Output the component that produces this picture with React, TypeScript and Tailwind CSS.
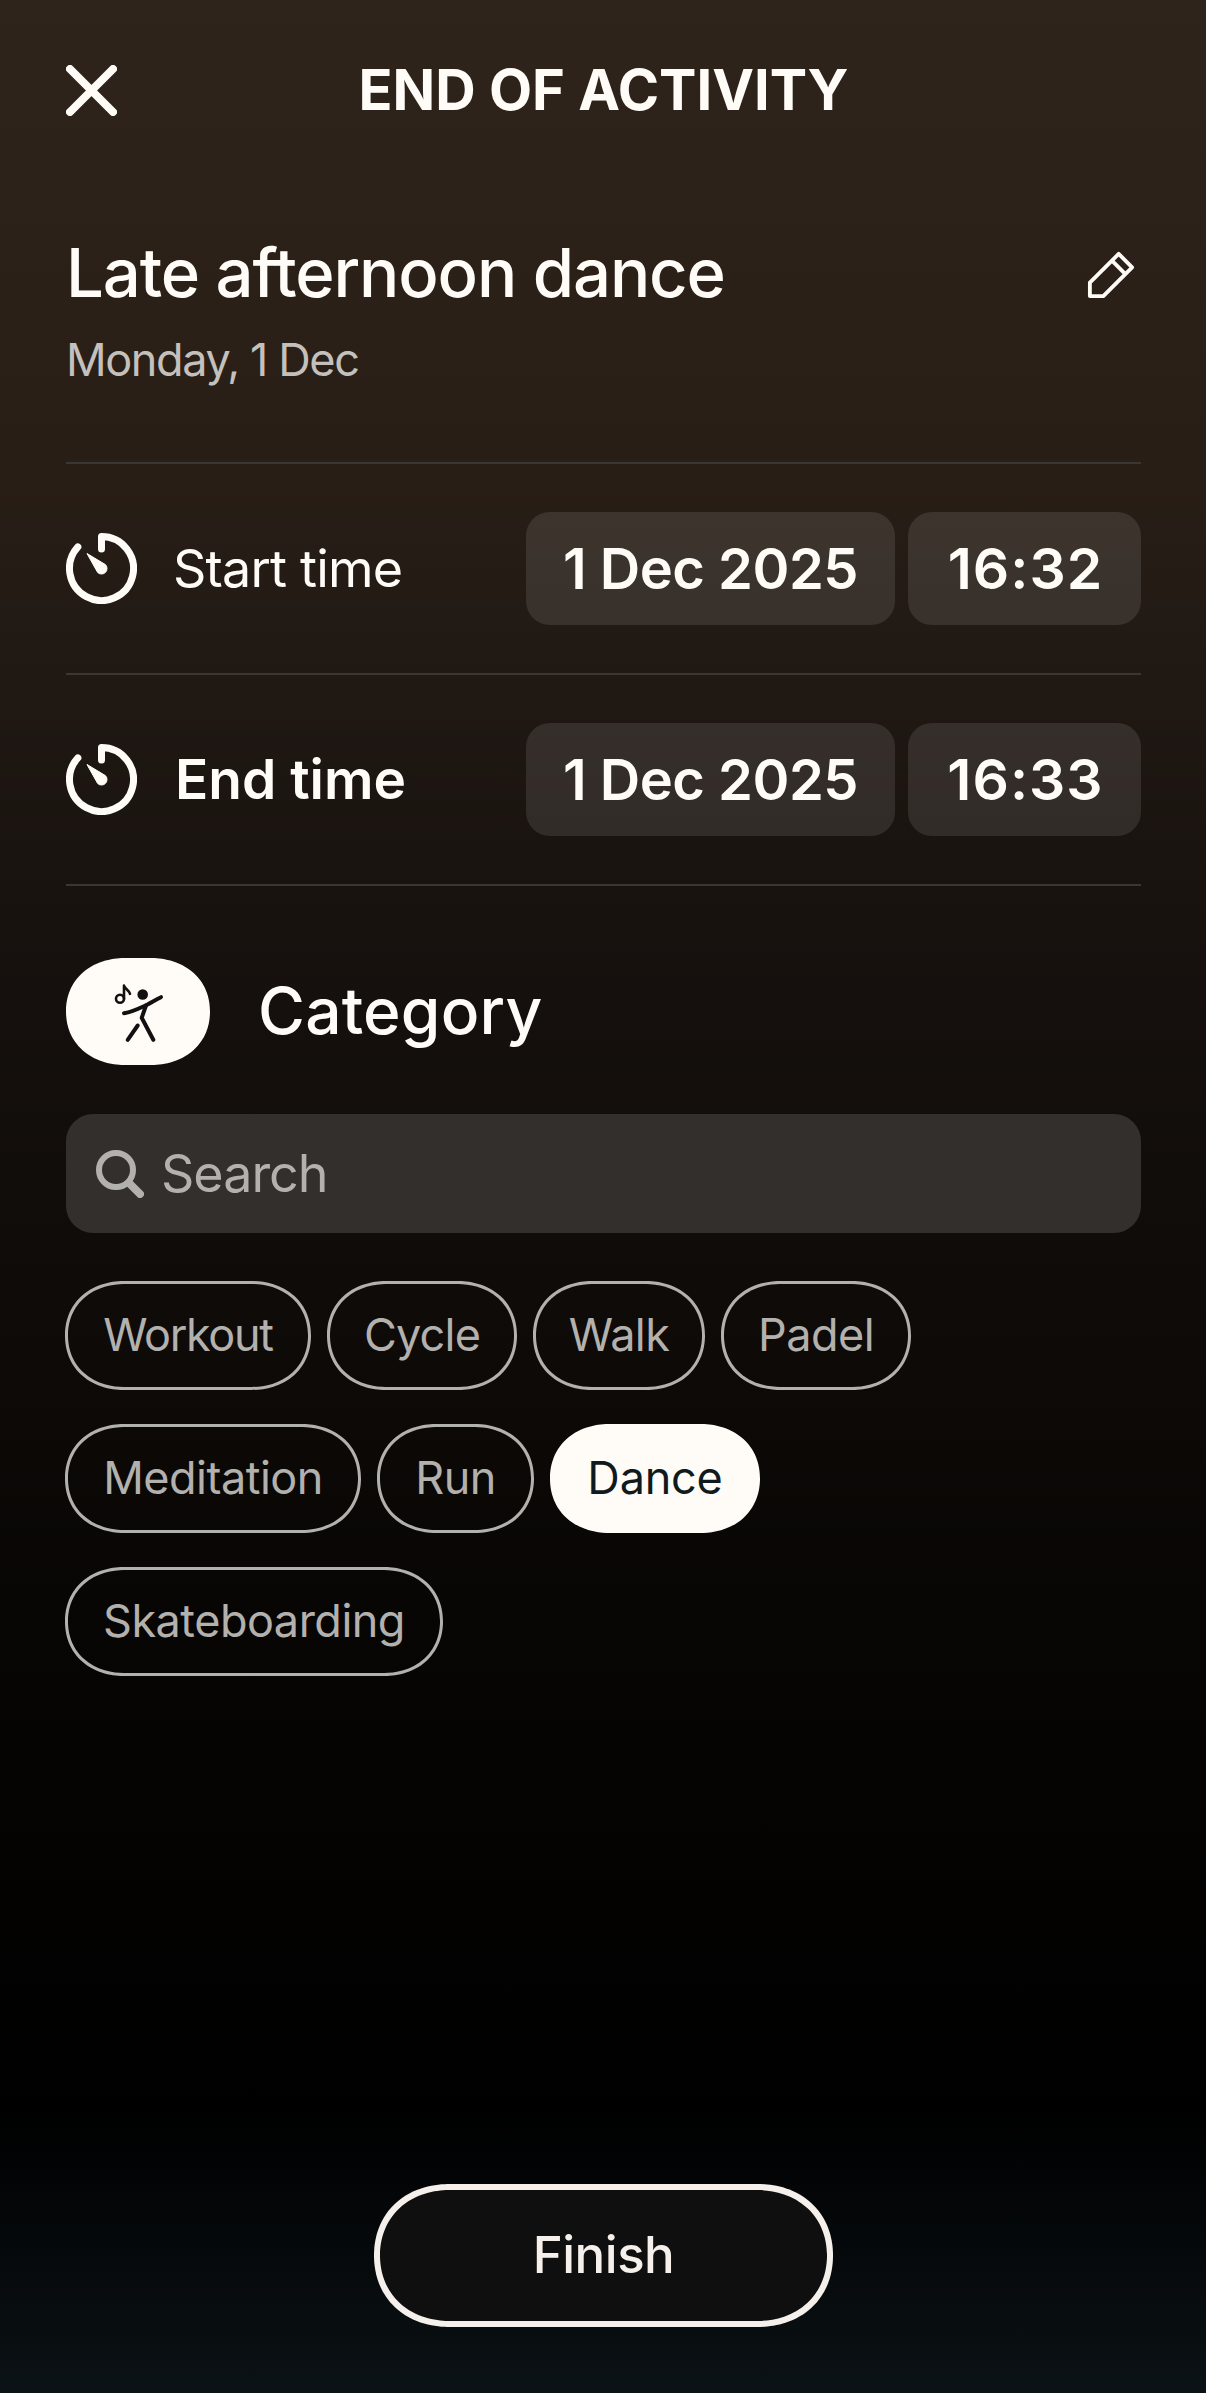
const TimerIcon = () => (
  <svg width="71" height="71" viewBox="0 0 71 71" fill="none" className="shrink-0">
    <path
      d="M11.85 13.95 A32 32 0 1 0 35.5 3.5 V16"
      stroke="#fffcf8"
      strokeWidth="7"
      strokeLinecap="round"
      strokeLinejoin="round"
    />
    <path
      d="M21 20.5 L39.4 31.6 A5.5 5.5 0 0 1 31.6 39.4 Z"
      fill="#fffcf8"
      stroke="#fffcf8"
      strokeWidth="1"
      strokeLinejoin="round"
    />
  </svg>
);

const DanceIcon = () => (
  <svg width="54" height="62" viewBox="0 0 54 62" fill="none">
    <g stroke="#111" strokeLinecap="round" strokeLinejoin="round">
      <circle cx="9" cy="17.8" r="4" strokeWidth="2.6" />
      <path d="M13 17.8 V4.5 C14 8 18 9 19 12.8" strokeWidth="2.6" />
      <path d="M13 32.2 C20 31 27 28 32.3 25.5 C38 23 44 19 50 16.2" strokeWidth="4" />
      <path d="M35 24.5 L30.7 36.8 L42.3 58.8" strokeWidth="4" />
      <path d="M26.7 44.5 L16.7 58.8" strokeWidth="4" />
    </g>
    <circle cx="31.7" cy="13.5" r="5.3" fill="#111" />
  </svg>
);

const TimeRow = ({ label, time, active }: { label: string; time: string; active?: boolean }) => (
  <div className="flex h-[211px] items-center border-b-2 border-[#3a3633]">
    <TimerIcon />
    <span
      className={`text-[#fffcf8] ${
        active ? "ml-[38px] text-[55px] font-semibold" : "ml-[36px] text-[52px] font-normal tracking-[-0.8px]"
      }`}
    >
      {label}
    </span>
    <div className="ml-auto flex gap-[13px] font-semibold text-[#fffcf8]">
      <div className="flex h-[113px] w-[369px] items-center justify-center rounded-[24px] bg-white/10 text-[56px] tracking-[-0.5px]">
        1 Dec 2025
      </div>
      <div className="flex h-[113px] w-[233px] items-center justify-center rounded-[24px] bg-white/10 pl-[2px] text-[57px] tracking-[1px]">
        {time}
      </div>
    </div>
  </div>
);

const Chip = ({ label, width, active }: { label: string; width: string; active?: boolean }) => (
  <div
    className={`flex h-[109px] items-center justify-center rounded-[60px/54.5px] pb-[2px] text-[45px] [corner-shape:superellipse(1.1)] ${width} ${
      active ? "bg-[#fffcf8] text-[#0f1a20]" : "border-[3px] border-[#b3b1ae] text-[#b3b1ae]"
    }`}
  >
    {label}
  </div>
);

const chips = [
  [
    { label: "Workout", width: "w-[246px] tracking-[-1.3px]" },
    { label: "Cycle", width: "w-[190px] tracking-[-0.8px]" },
    { label: "Walk", width: "w-[172px] tracking-[-0.6px]" },
    { label: "Padel", width: "w-[190px] tracking-[-0.5px]" },
  ],
  [
    { label: "Meditation", width: "w-[296px] tracking-[-0.5px]" },
    { label: "Run", width: "w-[157px] tracking-[-0.5px]" },
    { label: "Dance", width: "w-[210px] tracking-[-0.2px]" },
  ],
  [{ label: "Skateboarding", width: "w-[378px] tracking-[-0.5px]" }],
];

export default function App() {
  return (
    <div className="flex h-[2393px] w-[1206px] flex-col overflow-hidden bg-[linear-gradient(180deg,#2f241c_0%,#281e16_20%,#1f1813_29%,#15100d_42%,#080604_67%,#000_88%,#0b1215_100%)] pr-[65px] pl-[66px] font-['Inter',sans-serif]">
      <header className="relative flex h-[180px] items-center justify-center">
        <svg width="51" height="51" viewBox="0 0 51 51" fill="none" className="absolute left-0 top-[65px]">
          <path d="M4 4 L47 47 M47 4 L4 47" stroke="#fffcf8" strokeWidth="8" strokeLinecap="round" />
        </svg>
        <h1 className="text-[56px] font-bold text-[#fffcf8]">END OF ACTIVITY</h1>
      </header>

      <section className="flex h-[284px] items-start justify-between border-b-2 border-[#3a3633] pt-[56px]">
        <div>
          <h2 className="text-[67px] leading-[74px] font-medium tracking-[-1.15px] text-[#fffcf8]">
            Late afternoon dance
          </h2>
          <p className="mt-[23px] text-[45px] leading-[54px] tracking-[-1.4px] text-[#c4c1bd]">Monday, 1 Dec</p>
        </div>
        <svg width="48" height="48" viewBox="0 0 50 50" fill="none" className="mt-[15px] mr-[6px]">
          <path
            d="M3 47 H17 L47 17 L33 3 L3 33 Z M26 10 L40 24"
            stroke="#fffcf8"
            strokeWidth="4"
            strokeLinejoin="round"
          />
        </svg>
      </section>

      <TimeRow label="Start time" time="16:32" />
      <TimeRow label="End time" time="16:33" active />

      <section className="mt-[72px] flex items-center gap-[49px]">
        <div className="flex h-[107px] w-[144px] items-center justify-center rounded-[60px/53.5px] bg-[#fffcf8] [corner-shape:superellipse(1.1)]">
          <DanceIcon />
        </div>
        <h2 className="mb-[2px] -ml-[1px] text-[64px] leading-[77px] font-medium tracking-[0.2px] text-[#fffcf8]">
          Category
        </h2>
      </section>

      <div className="mt-[49px] flex h-[119px] items-center gap-[17px] rounded-[27px] bg-[#322f2d] px-[30px] text-[52px] tracking-[-1px] text-[#b3b1ae]">
        <svg width="48" height="48" viewBox="0 0 48 48" fill="none">
          <circle cx="20" cy="20" r="17" stroke="#b3b1ae" strokeWidth="6" />
          <path d="M33 33 L44 44" stroke="#b3b1ae" strokeWidth="8" strokeLinecap="round" />
        </svg>
        Search
      </div>

      <div className="mt-[48px] -ml-[1px] flex flex-col gap-[34px]">
        {chips.map((row) => (
          <div key={row[0].label} className="flex gap-[16px]">
            {row.map((chip) => (
              <Chip key={chip.label} label={chip.label} width={chip.width} active={chip.label === "Dance"} />
            ))}
          </div>
        ))}
      </div>

      <button className="mx-auto mt-auto mb-[66px] h-[143px] w-[459px] rounded-[76px/71.5px] border-[6px] border-[#f5f0eb] bg-[#0f0f0f] text-[51px] font-medium tracking-[-0.5px] text-[#f5f0eb] [corner-shape:superellipse(1.1)]">
        Finish
      </button>
    </div>
  );
}
